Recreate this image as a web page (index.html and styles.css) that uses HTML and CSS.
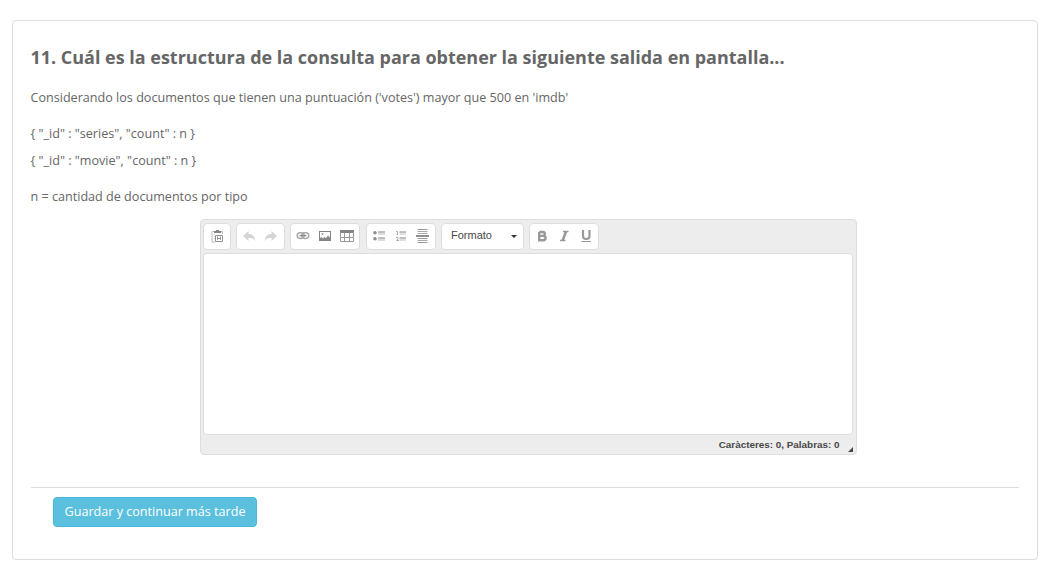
FILE: index.html
```html
<!DOCTYPE html>
<html lang="es">
<head>
<meta charset="utf-8">
<title>Pregunta 11</title>
<link rel="stylesheet" href="styles.css">
</head>
<body>
<main class="panel">
  <h1 class="question">11. Cuál es la estructura de la consulta para obtener la siguiente salida en pantalla...</h1>
  <p class="text">Considerando los documentos que tienen una puntuación ('votes') mayor que 500 en 'imdb'</p>
  <p class="text">{ "_id" : "series", "count" : n }<br>{ "_id" : "movie", "count" : n }</p>
  <p class="text">n = cantidad de documentos por tipo</p>
  <section class="editor">
    <div class="toolbar">
      <div class="group clipboard">
        <svg class="icon" viewBox="0 0 16 16"><path d="M5 3.500H3V14h3M12 3.500h1.500V6" fill="none" stroke="#bbb"/><path d="M5 3h2V2h3v1h2v2H5z" fill="#858585"/><path d="M4.500 6.500H6M4.500 8.500H6M4.500 10.500H6" stroke="#ddd"/><path d="M6.500 7.500h7v6h-7z" fill="#fff" stroke="#909090"/><path d="M8.500 8.500v3.500M11.500 8.500v3.500M9 11l1-1 1 1" fill="none" stroke="#999"/></svg>
      </div>
      <div class="group history">
        <svg class="icon disabled" viewBox="0 0 16 16"><path d="M7.500 3v3c4 0 6.500 2.500 6.500 6.500C12.500 10.500 10.500 10 7.500 10v3L2 8z"/></svg>
        <svg class="icon disabled" viewBox="0 0 16 16"><path d="M8.500 3v3C4.500 6 2 8.500 2 12.500 3.500 10.500 5.500 10 8.500 10v3L14 8z"/></svg>
      </div>
      <div class="group">
        <svg class="icon" viewBox="0 0 16 16" fill="none" stroke="#aaa" stroke-width="1.500"><rect x="2.200" y="4.800" width="7" height="5.600" rx="2.800"/><rect x="6.800" y="4.800" width="7" height="5.600" rx="2.800"/><path d="M4.500 7.600h7" stroke="#909090" stroke-width="1.400"/></svg>
        <svg class="icon" viewBox="0 0 16 16"><path d="M2 3h12v10H2zM3 4v8h10V4z" fill="#858585" fill-rule="evenodd"/><path d="M3 12v-2l1.500-1L6 10.500 7.500 9 9 10l2-2.500 2 2V12z" fill="#888"/><circle cx="5.500" cy="6" r="1" fill="#999"/></svg>
        <svg class="icon" viewBox="0 0 16 16"><path d="M1 2h14v3H1z" fill="#858585"/><path d="M1.500 4v9.500h13V4M5.500 5v9M10.500 5v9M1 9.500h14" fill="none" stroke="#999"/></svg>
      </div>
      <div class="group lists">
        <svg class="icon" viewBox="0 0 16 16"><circle cx="4" cy="4.700" r="1.800" fill="#909090"/><circle cx="4" cy="10.700" r="1.800" fill="#909090"/><path d="M7 4h7M7 10h7" stroke="#aaa" stroke-width="1.600"/><path d="M7 6h7M7 12h7" stroke="#bbb"/></svg>
        <svg class="icon" viewBox="0 0 16 16"><path d="M3 3.500h1.500V7M3 9.500h2V11L3.500 12.500H6" fill="none" stroke="#aaa"/><path d="M6.500 4H13M6.500 10H13" stroke="#aaa" stroke-width="1.600"/><path d="M6.500 6H13M6.500 12H13" stroke="#c0c0c0"/></svg>
        <svg class="icon" viewBox="0 0 16 16"><path d="M2.500 1.500h10M2.500 10.500h10M2.500 14.500h10" stroke="#999"/><path d="M2.500 3.500h10M2.500 5.500h10M2.500 12.500h10" stroke="#aaa"/><path d="M1 8h13" stroke="#909090" stroke-width="2"/></svg>
      </div>
      <div class="combo"><span>Formato</span><i class="arrow"></i></div>
      <div class="group">
        <svg class="icon" viewBox="0 0 16 16"><path d="M5.200 4h3.400c3 0 3 3.900 0 3.900H5.200H9c3.500 0 3.500 4.300 0 4.300H5.200V4" fill="none" stroke="#999" stroke-width="2.400"/></svg>
        <svg class="icon" viewBox="0 0 16 16"><path d="M7 3.500h5.500M4 12.500h5.500" stroke="#999" stroke-width="1.700"/><path d="M10 3.500 6.700 12.500" stroke="#999" stroke-width="2.500"/></svg>
        <svg class="icon" viewBox="0 0 16 16"><path d="M5 2v6c0 4 6.500 4 6.500 0V2" fill="none" stroke="#999" stroke-width="2.200"/><path d="M3.500 13.500H13" stroke="#999"/></svg>
      </div>
    </div>
    <div class="content"></div>
    <footer class="status"><span>Caràcteres: 0, Palabras: 0</span><i class="resizer"></i></footer>
  </section>
  <hr class="divider">
  <button class="save">Guardar y continuar más tarde</button>
</main>
</body>
</html>
```

FILE: styles.css
```css
* { box-sizing: border-box; }
body { margin: 0; padding: 20px 25px 0 12px; background: #fff; color: #666; font: 12.6px/27px "Open Sans", sans-serif; }
.panel { height: 540px; padding: 23px 18px 0 17.5px; border: 1px solid #ddd; border-radius: 4px; box-shadow: 0 1px 1px rgba(0,0,0,.05); }
.question { margin: 0 0 13px; font-size: 17.98px; line-height: 27px; font-weight: 700; white-space: nowrap; }
.text { margin: 0 0 9px; }
.editor { width: 657px; height: 236px; margin: 0 0 32px 169.5px; padding: 3px 3px 0 2px; border: 1px solid #ddd; border-radius: 4px; background: #ededed; font-family: "Liberation Sans", Arial, sans-serif; }
.toolbar { display: flex; gap: 5px; height: 30px; }
.group, .combo { display: flex; align-items: center; height: 27px; padding: 0 1px; border: 1px solid #ddd; border-radius: 4px; background: #fff; }
.group { padding-bottom: 1px; }
.clipboard { width: 28px; padding: 0 2px 1px; }
.history { padding-right: 2px; }
.lists { margin-left: 1px; }
.icon { width: 22px; height: 16px; flex: none; }
.disabled { fill: #d5d5d5; }
.combo { width: 83px; padding: 0 6px 2px 9px; justify-content: space-between; color: #484848; font-size: 11px; }
.arrow { border: 3px solid transparent; border-top-color: #333; border-bottom: 0; margin-top: 2px; }
.content { height: 182px; border: 1px solid #ddd; border-radius: 3px; background: #fff; }
.status { display: flex; justify-content: flex-end; gap: 8.5px; height: 19px; color: #484848; font-size: 9.9px; font-weight: 700; line-height: 20px; }
.resizer { width: 0; height: 0; margin-top: 12px; border-left: 5px solid transparent; border-bottom: 5px solid #484848; }
.divider { height: 1px; margin: 0 0 9px; border: 0; background: #ddd; }
.save { display: block; width: 204px; height: 30px; margin-left: 22.5px; padding: 0; border: 1px solid #46b8da; border-radius: 4px; background: #5bc0de; color: #fff; font: 12.6px/26px "Open Sans", sans-serif; }
```
